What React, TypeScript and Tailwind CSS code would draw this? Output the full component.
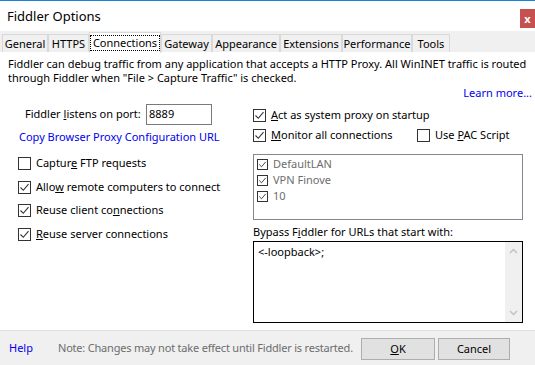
import React from 'react'

const FONT = { fontFamily: '"Noto Sans", "Open Sans", sans-serif' }

function Check({ checked, small }: { checked?: boolean; small?: boolean }) {
  const s = small ? 11 : 13
  return (
    <span
      className="inline-flex shrink-0 items-center justify-center border border-[#333] bg-white"
      style={{ width: s, height: s }}
    >
      {checked && (
        <svg width={s - 2} height={s - 2} viewBox="0 0 11 11">
          <path d="M1.5 5.5 L4.3 8.3 L9.5 2.2" fill="none" stroke="#333" strokeWidth="1.1" />
        </svg>
      )}
    </span>
  )
}

function Row({ checked, children, className = '' }: { checked?: boolean; children: React.ReactNode; className?: string }) {
  return (
    <div className={`flex h-4 items-center gap-[5px] whitespace-nowrap ${className}`}>
      <Check checked={checked} />
      <span className="leading-4">{children}</span>
    </div>
  )
}

const tabs = ['General', 'HTTPS', 'Connections', 'Gateway', 'Appearance', 'Extensions', 'Performance', 'Tools']
const tabW = [46, 41, 72, 51, 68, 62, 70, 38]

export default function App() {
  return (
    <div className="flex h-[365px] w-[535px] flex-col overflow-hidden whitespace-nowrap border-t border-[#1883d7] bg-white text-[11px] text-black" style={FONT}>
      {/* Title bar */}
      <div className="flex h-[30px] items-center justify-between pl-[7px]">
        <span className="text-[13px] leading-none">Fiddler Options</span>
        <span className="mt-[4px] flex h-[19px] w-[15px] items-center justify-center bg-[#c75050] text-[11px] font-bold leading-none text-white">x</span>
      </div>

      {/* Tabs */}
      <div className="flex h-[21px] items-end bg-[#f0f0f0] pl-[2px]">
        {tabs.map((t, i) =>
          t === 'Connections' ? (
            <div
              key={t}
              className="relative z-10 -mb-px flex h-[21px] items-center justify-center border border-b-0 border-[#d9d9d9] bg-white"
              style={{ width: tabW[i] }}
            >
              <span className="border border-dotted border-black px-[2px] leading-[14px]">{t}</span>
            </div>
          ) : (
            <div
              key={t}
              className="flex h-[18px] items-center justify-center border border-b-0 border-[#d9d9d9] bg-[#f0f0f0] leading-none"
              style={{ width: tabW[i] }}
            >
              {t}
            </div>
          )
        )}
      </div>

      {/* Content */}
      <div className="flex flex-1 flex-col">
        <p className="mt-[5px] pl-[8px] leading-[14px]">
          Fiddler can debug traffic from any application that accepts a HTTP Proxy. All WinINET traffic is routed
          <br />
          through Fiddler when "File &gt; Capture Traffic" is checked.
        </p>
        <div className="flex justify-end pr-[3px] leading-[15px] text-[#0000ee]">Learn more...</div>

        <div className="mt-[4px] flex">
          {/* Left */}
          <div className="w-[253px]">
            <div className="flex h-[21px] items-center">
              <span className="pl-[25px]">
                Fiddler <span className="underline">l</span>istens on port:
              </span>
              <div className="ml-auto mr-[41px] flex h-[21px] w-[66px] items-center border border-[#7a7a7a] pl-[2px]">8889</div>
            </div>
            <div className="mt-[4px] pl-[19px] leading-4 text-[#0000ee]">Copy Browser Proxy Configuration URL</div>
            <div className="mt-[10px] pl-[18px]">
              <Row>
                Captur<span className="underline">e</span> FTP requests
              </Row>
              <Row checked className="mt-[8px]">
                Allo<span className="underline">w</span> remote computers to connect
              </Row>
              <Row checked className="mt-[7px]">
                Reuse client co<span className="underline">n</span>nections
              </Row>
              <Row checked className="mt-[8px]">
                <span className="underline">R</span>euse server connections
              </Row>
            </div>
          </div>

          {/* Right */}
          <div className="w-[270px]">
            <Row checked className="mt-[3px]">
              <span className="underline">A</span>ct as system proxy on startup
            </Row>
            <div className="mt-[4px] flex">
              <Row checked className="w-[164px]">
                <span className="underline">M</span>onitor all connections
              </Row>
              <Row>
                Use <span className="underline">P</span>AC Script
              </Row>
            </div>
            <div className="mt-[11px] h-[66px] border border-[#828790] px-[3px] py-[1px] text-[#6d6d6d]">
              {['DefaultLAN', 'VPN Finove', '10'].map(n => (
                <div key={n} className="flex h-4 items-center gap-[5px]">
                  <Check checked small />
                  <span>{n}</span>
                </div>
              ))}
            </div>
            <div className="mt-[4px] h-4 leading-4">
              Bypass F<span className="underline">i</span>ddler for URLs that start with:
            </div>
            <div className="mt-[1px] flex h-[82px] border border-black">
              <div className="flex-1 pl-[4px] pt-[2px]">&lt;-loopback&gt;;</div>
              <div className="flex w-[17px] flex-col items-center justify-between bg-[#f0f0f0] py-[6px]">
                <svg width="9" height="6" viewBox="0 0 9 6">
                  <path d="M1 5 L4.5 1.5 L8 5" fill="none" stroke="#c2c2c2" strokeWidth="1.5" />
                </svg>
                <svg width="9" height="6" viewBox="0 0 9 6">
                  <path d="M1 1 L4.5 4.5 L8 1" fill="none" stroke="#c2c2c2" strokeWidth="1.5" />
                </svg>
              </div>
            </div>
          </div>
        </div>
      </div>

      {/* Footer */}
      <div className="flex h-[35px] items-center border-t border-[#dfdfdf] bg-[#f0f0f0]">
        <span className="pl-[9px] text-[#0000ee]">Help</span>
        <span className="ml-[25px] tracking-[-0.2px] text-[#6d6d6d]">Note: Changes may not take effect until Fiddler is restarted.</span>
        <div className="ml-auto mr-[25px] mt-[2px] flex gap-[3px]">
          <div className="flex h-[22px] w-[74px] items-center justify-center border border-[#adadad] bg-[#e1e1e1]">
            <span className="underline">O</span>K
          </div>
          <div className="flex h-[22px] w-[72px] items-center justify-center border border-[#adadad] bg-[#e1e1e1]">Cancel</div>
        </div>
      </div>
    </div>
  )
}
